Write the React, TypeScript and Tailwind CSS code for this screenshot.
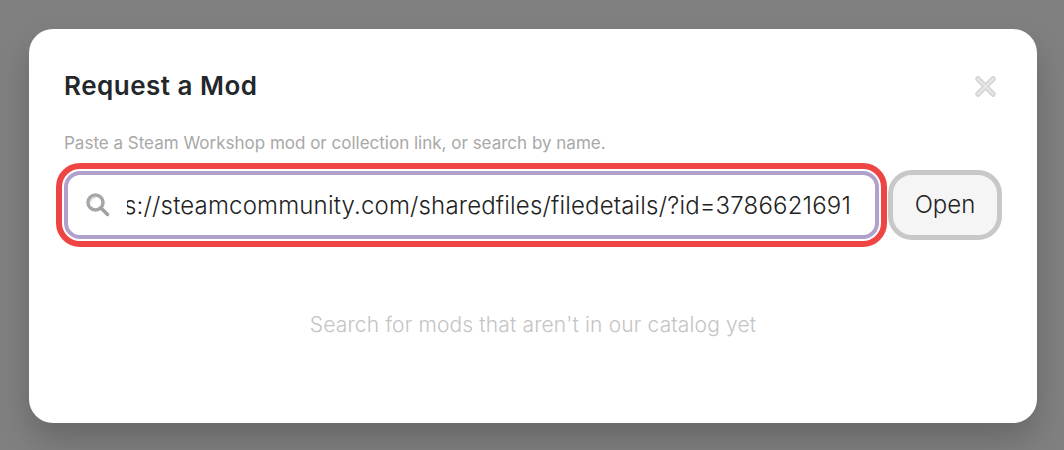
const App = () => {
  return (
    <div className="h-[450px] w-[1064px] overflow-hidden bg-[#808080] pt-[29px] pl-[29px] font-['Inter','Liberation_Sans',sans-serif]">
      <div className="h-[394px] w-[1008px] rounded-[24px] bg-white px-[35px] pt-[39px] shadow-[0_16px_32px_rgba(0,0,0,0.2)]">
        <div className="flex items-center justify-between">
          <h1 className="text-[26px] leading-[36px] font-semibold tracking-[0.5px] text-[#24272a]">Request a Mod</h1>
          <button className="mr-[5px]">
            <svg width="23" height="23" viewBox="0 0 24 24" fill="none">
              <path d="M4 4L20 20M20 4L4 20" stroke="#d2d2d2" strokeWidth="5.5" strokeLinecap="round" />
              <path d="M4 4L20 20M20 4L4 20" stroke="#e6e6e6" strokeWidth="2.5" strokeLinecap="round" />
            </svg>
          </button>
        </div>
        <p className="mt-[27px] text-[17px] leading-[24px] text-[#a8a8a8]">
          Paste a Steam Workshop mod or collection link, or search by name.
        </p>
        <div className="mt-[15px] flex items-center gap-[9px]">
          <div className="flex h-[68px] w-[815px] items-center rounded-[16px] border-[4px] border-[#b0a0cc] pr-[24px] pl-[17px] outline-[6px] outline-offset-[2px] outline-[#ef4444]">
            <svg className="shrink-0" width="26" height="26" viewBox="0 0 26 26" fill="none">
              <circle cx="10.5" cy="10.5" r="7.5" fill="#fff" stroke="#a6a6a6" strokeWidth="3.5" />
              <path d="M16 16L22.5 22.5" stroke="#a0a0a0" strokeWidth="3.5" strokeLinecap="round" />
              <path d="M5.5 10.5A5 5 0 0 1 10.5 5.5" stroke="#dcdcdc" strokeWidth="2" />
            </svg>
            <div className="ml-[16px] flex min-w-0 flex-1 justify-end overflow-hidden">
              <span className="pt-[1px] text-[24px] leading-[32px] font-light tracking-[0.17px] whitespace-nowrap text-[#222222]">
                https://steamcommunity.com/sharedfiles/filedetails/?id=3786621691
              </span>
            </div>
          </div>
          <button className="flex h-[70px] w-[116px] items-center justify-center rounded-[24px] border-[5px] border-[#c8c8c8] bg-[#f5f5f5] text-[24px] font-light text-[#222222]">
            Open
          </button>
        </div>
        <p className="mt-[71px] text-center text-[21px] leading-[28px] font-light tracking-[0.15px] text-[#c4c4c4]">
          Search for mods that aren't in our catalog yet
        </p>
      </div>
    </div>
  );
};

export default App;
